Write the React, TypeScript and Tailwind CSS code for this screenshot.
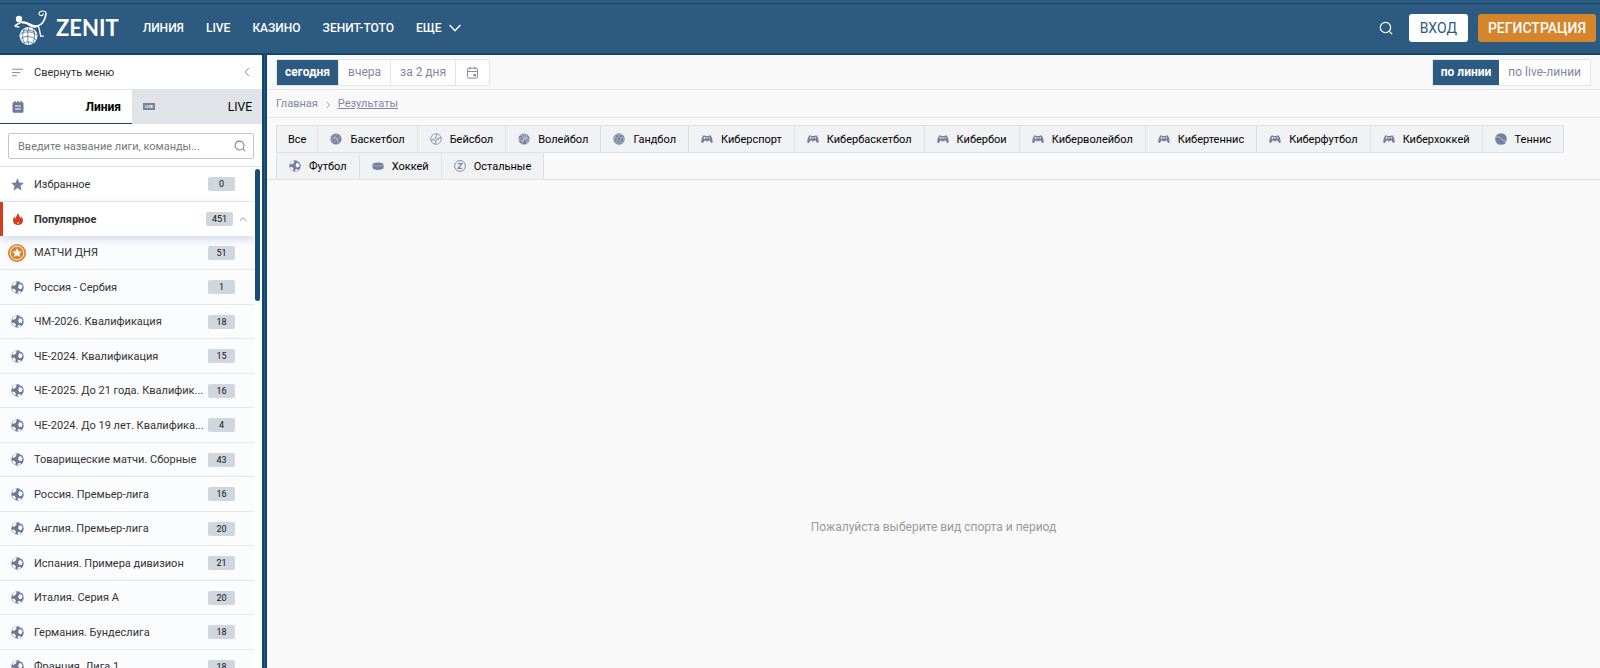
import type { ReactNode } from 'react';

type IconProps = { className?: string };

const football = (
  <>
    <circle cx="8" cy="8" r="7.6" />
    <g fill="#fff">
      <path d="M1.6 5.2C2.400 3.200 4 1.700 6 1L7 2.200 5.600 4.600 2.800 6Z" />
      <path d="M9.600 4.400 12.400 4 14 6.600 13.200 9.400 10.600 10 9 7.600Z" />
      <path d="M1.400 9.600 4.200 9.400 6 12 5.200 14.600C3.200 13.600 1.800 11.800 1.400 9.600Z" />
      <path d="M8.600 12.600 11.600 12.400 12 13.600C10.800 14.600 9.400 15 8 15Z" />
      <path d="M10.400 1.300 12.600 2.200 11.200 2.700Z" />
    </g>
  </>
);

const pad = (
  <path
    fillRule="evenodd"
    d="M4 3 6.200 4H9.800L12 3C14 3.400 15.800 8.800 15.600 12.400 15 13.800 13.800 13.600 12.800 12.200L10.800 9.400 9.600 11H6.400L5.200 9.400 3.200 12.200C2.200 13.600 1 13.800.4 12.400.2 8.800 2 3.400 4 3ZM4.200 5v1H3.200v1h1v1h1V7h1V6h-1V5ZM11.200 5.200a1 1 0 1 0 0 2 1 1 0 0 0 0-2ZM7 5.200 8 8.600 9 5.200Z"
  />
);

const shapes: Record<string, ReactNode> = {
  football,
  pad,
  basketball: (
    <>
      <circle cx="8" cy="8" r="7.4" />
      <path
        d="M1.5 6.5C6 5.5 11 8 13 13M4 2.4C8 5 11 9 10 15M10 1C8 5 3 9 1.5 11.4M14.6 5.2C11 6.5 6 10 4.5 14"
        fill="none"
        stroke="#d5d9e2"
        strokeWidth="0.7"
      />
    </>
  ),
  baseball: (
    <g fill="none" stroke="currentColor">
      <circle cx="8" cy="8" r="7.1" strokeWidth="1" />
      <path d="M1.400 9.800C6 9.600 9 6 9.200 1.200M6.600 14.700C6.800 10 10 6.600 14.600 6.200" strokeWidth="1.100" />
      <path d="m3.600 7.600 1.400 3M6.400 5.400l2.400 2M7 10l2.600 1.600M10.400 6.600l1 2.800" strokeWidth="0.8" />
    </g>
  ),
  volleyball: (
    <>
      <circle cx="8" cy="8" r="7.4" />
      <path
        d="M8 8C8 5 6 3 3 2.6M8 8c2.600-1.500 5.500-.8 7 1.600M8 8c0 3-2 5.400-4.600 6M9.600 7.200C9.600 4.600 8 2 6 .8M6.600 9.400C4.400 10.400 2 10 .6 8.600M9.800 8.600c2 1.200 2.800 3.600 2.400 5.600M12 7C12 4.600 11.200 2.800 10 1M5.600 6C3.600 6.400 2 7.400.8 9"
        fill="none"
        stroke="#f0f1f3"
        strokeWidth="0.9"
      />
    </>
  ),
  handball: (
    <>
      <circle cx="8" cy="8" r="7.6" />
      <path
        d="m8 5 2.800 2-1 3.400H6.200l-1-3.400ZM8 5V2.400M10.800 7l2.600-1M9.800 10.400l1.800 2.400M6.200 10.400l-1.800 2.400M5.200 7 2.600 6M8 2.400 4.800 1.800 2.600 6 1.400 9.400l3 3.400 3.600 1 3.600-1 3-3.400L13.400 6l-2.200-4.200Z"
        fill="none"
        stroke="#d5d9e2"
        strokeWidth="0.7"
      />
    </>
  ),
  tennis: (
    <>
      <circle cx="8" cy="8" r="7.8" />
      <path d="M1.400 5.400C5 4.600 7 6 8.400 8s3.600 3 6.400 2.600" fill="none" stroke="#d9dce4" strokeWidth="0.9" />
    </>
  ),
  puck: (
    <>
      <path d="M.6 6C.6 4.200 4 3.200 8 3.200s7.400 1 7.400 2.800v4.400c0 1.800-3.400 2.800-7.400 2.800s-7.400-1-7.400-2.800Z" />
      <path d="M1 6.600C3 8.600 13 8.600 15 6.600" fill="none" stroke="#c3c8d6" strokeWidth="0.7" />
    </>
  ),
  other: (
    <g fill="none" stroke="currentColor">
      <circle cx="8" cy="8" r="7.200" strokeWidth="1.200" />
      <path d="M5.200 4.800h5.400l-5.200 6.400h5.400" strokeWidth="1.500" />
    </g>
  ),
  star: <path d="m8 .4 2.300 5.100 5.500.5-4.100 3.700 1.200 5.600L8 12.400l-4.900 2.900 1.200-5.600L.2 6l5.500-.5Z" />,
  flame: (
    <path d="M8 0C9 2.400 10.600 4 10.800 7c.8-.6 1.200-1.600 1.200-2.800 1.800 2 2.800 4 2.600 6.400C14.300 13.800 11.400 16 8 16s-6.200-2.200-6.600-5.400C1.200 8.400 2 6.200 3.400 4.600c0 1.400.4 2.400 1.300 3C5 4.600 7 2.600 8 0ZM8 11.800c-.7.7-.9 1.200-.8 1.700.1.500.4.700.8.700s.8-.2.800-.7c0-.6-.3-1.200-.8-1.700Z" />
  ),
  medal: (
    <>
      <circle cx="8" cy="8" r="8" />
      <circle cx="8" cy="8" r="6.100" fill="none" stroke="#fff" strokeWidth="0.8" />
      <path d="m8 3.800 1.300 2.700 2.900.3-2.200 1.900.7 2.900L8 10.100l-2.700 1.500.7-2.900-2.200-1.900 2.900-.3Z" fill="#fff" />
    </>
  ),
  notebook: (
    <path
      fillRule="evenodd"
      d="M3 0h1.800v1.600h2.200V0h2v1.600h2.200V0H13v1.600h.6A1.700 1.700 0 0 1 15.300 3.300V14a1.700 1.700 0 0 1-1.700 1.700H2.400A1.700 1.700 0 0 1 .7 14V3.300A1.700 1.700 0 0 1 2.400 1.600H3ZM4 6v1.300h8V6Zm0 4v1.300h8V10Z"
    />
  ),
  lines: <path d="M0 2.500h16V4H0ZM0 7.200h12v1.500H0ZM0 12h7v1.500H0Z" />,
  calendar: (
    <g fill="none" stroke="currentColor" strokeWidth="1.200">
      <rect x="1.800" y="2.600" width="12.400" height="12.400" rx="2" />
      <path d="M1.800 6.800h12.400M5 .8v3.600M11 .8v3.600" />
      <rect x="9.800" y="10.400" width="1.800" height="1.800" fill="currentColor" />
    </g>
  ),
  search: (
    <g fill="none" stroke="currentColor" strokeWidth="1.400">
      <circle cx="7.400" cy="7.400" r="5.900" />
      <path d="m11.800 11.800 3.200 3.200" />
    </g>
  ),
  left: <path d="M11 1.500 5 8l6 6.500" fill="none" stroke="currentColor" strokeWidth="1.500" />,
  right: <path d="m5.500 2 5.500 6-5.500 6" fill="none" stroke="currentColor" strokeWidth="1.500" />,
  up: <path d="m1.500 12 6.500-7 6.500 7" fill="none" stroke="currentColor" strokeWidth="1.900" />,
  down: <path d="m.8 4 7.200 7.500L15.200 4" fill="none" stroke="currentColor" strokeWidth="1.900" />,
};

function Icon({ name, className = 'size-3' }: IconProps & { name: string }) {
  return (
    <svg viewBox="0 0 16 16" fill="currentColor" aria-hidden="true" className={`shrink-0 ${className}`}>
      {shapes[name]}
    </svg>
  );
}

function LogoMark() {
  return (
    <svg viewBox="0 0 34 36" aria-hidden="true" className="h-9 w-[34px]" fill="none" stroke="#fff">
      <circle cx="5" cy="9" r="3.200" fill="#fff" stroke="none" />
      <path d="M.8 16C5 13 8 11 12 12.500S19 17 23.500 16 31 10 32.200 3.400" strokeWidth="1.700" />
      <path d="M8 13c4-1.800 6 1.500 10 3.400 2 .6 4 .4 6-.6" strokeWidth="1.900" />
      <path d="M32.200 3.800C32 .2 25 .2 25 3.600c0 2.800 4.600 2.600 4.300-.2" strokeWidth="1.100" />
      <path d="M24 16c1.500 2 2 6 2.600 10.200h3.200" strokeWidth="1.300" />
      <path d="M.8 16.300 5.500 17.200" strokeWidth="1.200" />
      <circle cx="14.500" cy="26" r="9" fill="#fff" stroke="none" />
      <g stroke="#2c5a80" strokeWidth="0.700">
        <path d="M6 24c4-3 12-3 17 1M6.500 29c4-3.500 11-3.500 15.500 1M9 20.500c4-1 8-.5 11.500 1.500M10 33c2-1.500 6-1.500 8.500.4" />
        <path d="M14.800 17.500c-1.400 5-1.400 12-.3 17M10.400 18.800c-2.400 4.600-2.400 10 0 14.500M19 18.600c2.200 4.600 2 10-.4 14.700" />
      </g>
    </svg>
  );
}

const nav = ['ЛИНИЯ', 'LIVE', 'КАЗИНО', 'ЗЕНИТ-ТОТО'];

const leagues = [
  ['МАТЧИ ДНЯ', 51],
  ['Россия - Сербия', 1],
  ['ЧМ-2026. Квалификация', 18],
  ['ЧЕ-2024. Квалификация', 15],
  ['ЧЕ-2025. До 21 года. Квалифик...', 16],
  ['ЧЕ-2024. До 19 лет. Квалифика...', 4],
  ['Товарищеские матчи. Сборные', 43],
  ['Россия. Премьер-лига', 16],
  ['Англия. Премьер-лига', 20],
  ['Испания. Примера дивизион', 21],
  ['Италия. Серия А', 20],
  ['Германия. Бундеслига', 18],
  ['Франция. Лига 1', 18],
] as const;

const sports = [
  ['Все', ''],
  ['Баскетбол', 'basketball'],
  ['Бейсбол', 'baseball'],
  ['Волейбол', 'volleyball'],
  ['Гандбол', 'handball'],
  ['Киберспорт', 'pad'],
  ['Кибербаскетбол', 'pad'],
  ['Кибербои', 'pad'],
  ['Киберволейбол', 'pad'],
  ['Кибертеннис', 'pad'],
  ['Киберфутбол', 'pad'],
  ['Киберхоккей', 'pad'],
  ['Теннис', 'tennis'],
  ['Футбол', 'football'],
  ['Хоккей', 'puck'],
  ['Остальные', 'other'],
];

function Count({ value }: { value: number }) {
  return (
    <span className="h-3.5 w-[27px] shrink-0 rounded-[2px] bg-[#d0d6de] text-center text-[9px] leading-[14px] font-normal text-[#111]">
      {value}
    </span>
  );
}

function Header() {
  return (
    <header className="flex h-[55px] shrink-0 items-center border-b-2 border-[#0f4570] bg-[#2c5a80] pt-[3px] pr-1 text-white shadow-[inset_0_3px_0_#2c5a80,inset_0_4px_0_#14466e]">
      <a href="#home" className="flex items-center gap-2 pl-3.5" aria-label="ZENIT">
        <LogoMark />
        <span className="font-[Lato,sans-serif] text-[22px] leading-8 font-bold">ZENIT</span>
      </a>
      <nav className="ml-6 flex items-center gap-[22px] text-[12px] font-medium">
        {nav.map((item) => (
          <a key={item} href="#section">
            {item}
          </a>
        ))}
        <button type="button" className="flex items-center gap-[7px]">
          ЕЩЕ
          <Icon name="down" className="size-3" />
        </button>
      </nav>
      <div className="ml-auto flex items-center">
        <button type="button" aria-label="Поиск" className="mr-4">
          <Icon name="search" className="size-3.5" />
        </button>
        <button type="button" className="mr-2.5 h-7 rounded-[3px] bg-white px-[11px] text-[14px] text-[#2c5a80]">
          ВХОД
        </button>
        <button type="button" className="h-7 rounded-[3px] bg-[#d5852b] px-2.5 text-[14px] font-medium">
          РЕГИСТРАЦИЯ
        </button>
      </div>
    </header>
  );
}

function Sidebar() {
  return (
    <aside className="flex w-[262px] shrink-0 flex-col bg-white text-[#333]">
      <button type="button" className="flex h-[34px] shrink-0 items-center pr-2.5 pl-3 text-[11px]">
        <Icon name="lines" className="size-[11px] text-[#8a8fa8]" />
        <span className="ml-[11px] pt-0.5">Свернуть меню</span>
        <Icon name="left" className="ml-auto size-2.5 text-[#8a8fa8]" />
      </button>
      <div className="flex h-[35px] shrink-0 text-[12px] text-black">
        <button
          type="button"
          className="flex w-[132px] items-center justify-between border-t border-b border-t-[#e3e7ec] border-b-[#164873] pr-[11px] pl-3 font-bold"
        >
          <Icon name="notebook" className="size-3 text-[#6f7795]" />
          Линия
        </button>
        <button type="button" className="flex flex-1 items-center justify-between bg-[#e0e4e9] pr-2.5 pl-[11px]">
          <span className="h-[7px] w-3 bg-[#7a819c] text-center text-[4px] leading-[7px] font-bold text-white">
            LIVE
          </span>
          LIVE
        </button>
      </div>
      <div className="shrink-0 border-b border-[#dfe3e8] px-2 pt-[9px] pb-[7px]">
        <label className="flex h-[26px] items-center rounded-[2px] border border-[#c3c6cb] pr-[7px] pl-[9px]">
          <input
            type="text"
            aria-label="Поиск лиги"
            placeholder="Введите название лиги, команды..."
            className="min-w-0 flex-1 pt-0.5 text-[11px] outline-none placeholder:text-[#777]"
          />
          <Icon name="search" className="size-3 text-[#7a819c]" />
        </label>
      </div>
      <div className="flex min-h-0 flex-1">
        <ul className="min-w-0 flex-1 overflow-hidden text-[11px]">
          <li className="flex h-[35px] items-center border-b border-[#e6e9ee] pr-[19px] pl-[11px]">
            <Icon name="star" className="size-[13px] text-[#7480a0]" />
            <span className="ml-2.5 flex-1 pt-0.5">Избранное</span>
            <Count value={0} />
          </li>
          <li className="relative z-10 flex h-[34px] items-center border-l-[3px] border-[#d63b1c] bg-white pr-[7px] pl-[9px] font-bold shadow-[0_3px_9px_#cfd8e6]">
            <Icon name="flame" className="size-3 text-[#d63b1c]" />
            <span className="ml-2.5 flex-1 pt-0.5">Популярное</span>
            <Count value={451} />
            <Icon name="up" className="ml-1.5 size-2 text-[#8a8fa8]" />
          </li>
          {leagues.map(([name, count], i) => (
            <li
              key={name}
              className="flex items-center border-b border-[#e3e7ee] bg-[#fbfcfe] pr-[19px] pl-2 odd:h-[34px] even:h-[35px]"
            >
              <span className="flex w-[18px] justify-center">
                {i === 0 ? (
                  <Icon name="medal" className="size-[18px] text-[#d5852b]" />
                ) : (
                  <Icon name="football" className="size-[13px] text-[#6c7898]" />
                )}
              </span>
              <span className="ml-2 flex-1 pt-0.5 whitespace-nowrap">{name}</span>
              <Count value={count} />
            </li>
          ))}
        </ul>
        <div className="w-2 shrink-0 pt-0.5 pl-px">
          <div className="h-[132px] w-[5px] rounded-full bg-[#164d78]" />
        </div>
      </div>
    </aside>
  );
}

function Results() {
  return (
    <main className="flex min-w-0 flex-1 flex-col bg-[#f9f9f9]">
      <div className="flex h-[35px] shrink-0 items-center justify-between border-b border-[#e5e7e9] px-[9px] text-[12px] text-[#8286a3]">
        <div className="flex h-[27px] divide-x divide-[#e3e5e8] rounded-[2px] border border-[#e3e5e8] bg-white">
          <button type="button" className="bg-[#2c5a80] px-2 font-bold text-white">
            сегодня
          </button>
          <button type="button" className="px-[9px]">
            вчера
          </button>
          <button type="button" className="px-[9px]">
            за 2 дня
          </button>
          <button type="button" aria-label="Календарь" className="px-2.5">
            <Icon name="calendar" className="size-[13px]" />
          </button>
        </div>
        <div className="flex h-[27px] border border-[#e3e5e8] bg-white">
          <button type="button" className="bg-[#2c5a80] px-2 font-bold text-white">
            по линии
          </button>
          <button type="button" className="px-[9px]">
            по live-линии
          </button>
        </div>
      </div>
      <nav className="flex h-7 shrink-0 items-center gap-1.5 border-b border-[#e5e7e9] px-[9px] pt-0.5 text-[11px] text-[#8286a3]">
        <a href="#main">Главная</a>
        <Icon name="right" className="size-2" />
        <a href="#results" className="underline">
          Результаты
        </a>
      </nav>
      <div className="flex shrink-0 flex-wrap border-b border-[#d8dfe5] px-[9px] pt-[7px] text-[11px] text-black">
        {sports.map(([name, icon]) => (
          <button
            key={name}
            type="button"
            className="-mr-px -mb-px flex h-7 items-center gap-2 rounded-t-[2px] border border-[#dfe1e4] bg-[#f0f2f4] px-3 first:px-[11px]"
          >
            {icon && <Icon name={icon} className="size-3 text-[#7480a0]" />}
            <span className="pt-0.5">{name}</span>
          </button>
        ))}
      </div>
      <p className="pt-[337px] text-center text-[12px] leading-5 text-[#999]">Пожалуйста выберите вид спорта и период</p>
    </main>
  );
}

export default function App() {
  return (
    <div className="flex h-screen flex-col overflow-hidden font-[Roboto,sans-serif]">
      <Header />
      <div className="flex min-h-0 flex-1">
        <Sidebar />
        <div className="w-[5px] shrink-0 border-x-2 border-[#0f4570] bg-[#2c5a80]" />
        <Results />
      </div>
    </div>
  );
}
